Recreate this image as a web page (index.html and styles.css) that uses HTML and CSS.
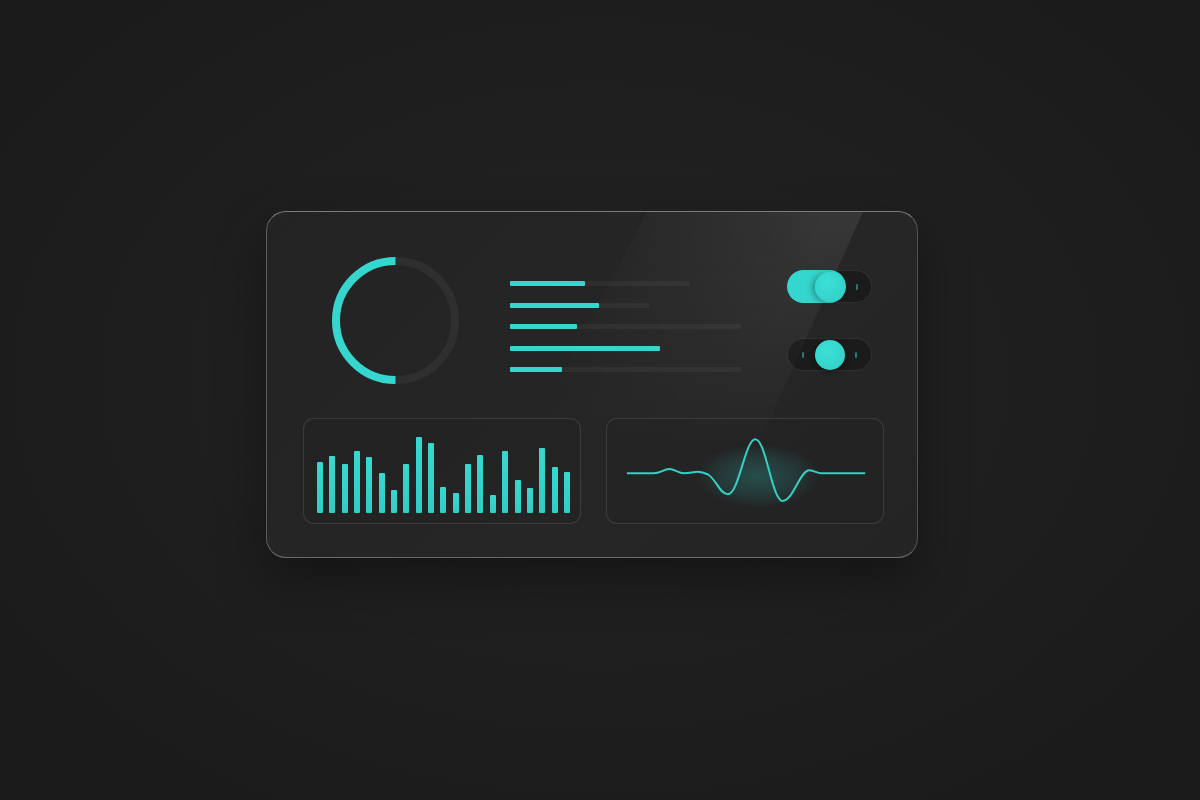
FILE: index.html
```html
<!DOCTYPE html>
<html lang="en">
<head>
<meta charset="utf-8">
<title>Dashboard</title>
<link rel="stylesheet" href="styles.css">
</head>
<body>
<div class="stage">
  <div class="card">
    <div class="top">
      <div class="donut">
        <svg width="127" height="127" viewBox="0 0 127 127">
          <circle cx="63.5" cy="63.5" r="59.5" fill="none" stroke="#2f2f2f" stroke-width="8"/>
          <path d="M63.5 4 A59.5 59.5 0 0 0 63.5 123" fill="none" stroke="#35d6cd" stroke-width="8"/>
        </svg>
      </div>
      <div class="bars">
        <div class="row"><span class="track" style="width:180px"></span><span class="fill" style="width:75px"></span></div>
        <div class="row"><span class="track" style="width:139px"></span><span class="fill" style="width:89px"></span></div>
        <div class="row"><span class="track" style="width:231px"></span><span class="fill" style="width:67px"></span></div>
        <div class="row"><span class="track" style="width:150px"></span><span class="fill" style="width:150px"></span></div>
        <div class="row"><span class="track" style="width:232px"></span><span class="fill" style="width:52px"></span></div>
      </div>
      <div class="toggles">
        <div class="toggle on">
          <span class="pill"><span class="knob"></span></span>
          <span class="tick"></span>
        </div>
        <div class="toggle mid">
          <span class="tick"></span>
          <span class="knob"></span>
          <span class="tick"></span>
        </div>
      </div>
    </div>
    <div class="bottom">
      <div class="panel chart">
        <span class="col" style="height:51px"></span>
        <span class="col" style="height:57px"></span>
        <span class="col" style="height:49px"></span>
        <span class="col" style="height:62px"></span>
        <span class="col" style="height:56px"></span>
        <span class="col" style="height:40px"></span>
        <span class="col" style="height:23px"></span>
        <span class="col" style="height:49px"></span>
        <span class="col" style="height:76px"></span>
        <span class="col" style="height:70px"></span>
        <span class="col" style="height:26px"></span>
        <span class="col" style="height:20px"></span>
        <span class="col" style="height:49px"></span>
        <span class="col" style="height:58px"></span>
        <span class="col" style="height:18px"></span>
        <span class="col" style="height:62px"></span>
        <span class="col" style="height:33px"></span>
        <span class="col" style="height:25px"></span>
        <span class="col" style="height:65px"></span>
        <span class="col" style="height:46px"></span>
        <span class="col" style="height:41px"></span>
      </div>
      <div class="panel wave">
        <svg width="276" height="104" viewBox="1 1 276 104">
          <defs>
            <radialGradient id="glow" cx="0.5" cy="0.5" r="0.5">
              <stop offset="0" stop-color="#2fc9bf" stop-opacity="0.26"/>
              <stop offset="0.6" stop-color="#2fc9bf" stop-opacity="0.13"/>
              <stop offset="1" stop-color="#2fc9bf" stop-opacity="0"/>
            </radialGradient>
          </defs>
          <ellipse cx="152" cy="58" rx="62" ry="32" fill="url(#glow)"/>
          <path d="M21.7 55.3 L48 55.3 C54 55.3 58 51 63.3 51 C69 51 72 55.3 78 55.3 C84 55.3 87 53.8 91.7 53.8 C96 53.8 99 55 102 56.5 C110 61 114 76.3 121.7 76.3 C133 76.3 139 21.3 149.3 21.3 C160 21.3 166 83 176.7 83 C187 83 194 52.3 203.3 52.3 C208 52.3 211 55.3 215 55.3 L258.3 55.3" fill="none" stroke="#34cfc5" stroke-width="2" stroke-linecap="round"/>
        </svg>
      </div>
    </div>
  </div>
</div>
</body>
</html>
```

FILE: styles.css
```css
html, body {
  margin: 0;
  padding: 0;
}

body {
  width: 1200px;
  height: 800px;
  overflow: hidden;
  background: radial-gradient(ellipse 700px 500px at 50% 47%, #232323 0%, #1f1f1f 55%, #1b1b1b 100%);
  font-family: "Inter", "Liberation Sans", sans-serif;
}

.stage {
  padding: 211px 0 0 266px;
}

.card {
  position: relative;
  box-sizing: border-box;
  width: 652px;
  height: 347px;
  padding: 45px 35px 35px 36px;
  border-radius: 20px;
  border: 1.5px solid rgba(255, 255, 255, 0.26);
  border-top-color: rgba(255, 255, 255, 0.4);
  border-bottom-color: rgba(255, 255, 255, 0.32);
  border-right-color: rgba(255, 255, 255, 0.22);
  background: linear-gradient(135deg, #232323 0%, #262626 60%, #242424 100%);
  box-shadow: 0 22px 50px rgba(0, 0, 0, 0.35), inset 0 0 30px rgba(255, 255, 255, 0.015);
  overflow: hidden;
}

.card::before {
  content: "";
  position: absolute;
  inset: 0;
  pointer-events: none;
  background: linear-gradient(to bottom, rgba(255, 255, 255, 0.08) 0%, rgba(255, 255, 255, 0.035) 40%, rgba(255, 255, 255, 0) 72%);
  clip-path: polygon(380px 0, 596px 0, 440px 347px, 200px 347px);
  -webkit-mask-image: linear-gradient(114deg, transparent 40%, #000 70%, #000 100%);
  mask-image: linear-gradient(114deg, transparent 40%, #000 70%, #000 100%);
}

.top {
  position: relative;
  display: flex;
  align-items: flex-start;
  height: 127px;
}

.donut {
  margin-left: 29px;
  width: 127px;
  height: 127px;
}

.donut svg {
  display: block;
}

.bars {
  margin-left: 51px;
  padding-top: 24px;
  display: flex;
  flex-direction: column;
  gap: 16.5px;
}

.row {
  position: relative;
  height: 5px;
}

.row .track {
  position: absolute;
  left: 0;
  top: 0;
  height: 5px;
  background: rgba(255, 255, 255, 0.045);
  border-radius: 1px;
}

.row .fill {
  position: absolute;
  left: 0;
  top: 0;
  height: 5px;
  background: #35d6cd;
  border-radius: 1px;
}

.toggles {
  margin-left: auto;
  margin-right: 10px;
  padding-top: 13px;
  display: flex;
  flex-direction: column;
  gap: 35px;
}

.toggle {
  box-sizing: border-box;
  width: 85px;
  height: 33px;
  border-radius: 17px;
  border: 1px solid rgba(255, 255, 255, 0.09);
  background: rgba(10, 10, 10, 0.35);
  display: flex;
  align-items: center;
}

.toggle .tick {
  width: 2px;
  height: 6px;
  border-radius: 1px;
  background: rgba(53, 214, 205, 0.5);
}

.toggle.on .pill {
  margin-left: -1px;
  width: 59px;
  height: 33px;
  border-radius: 17px;
  background: #35d6cd;
  display: flex;
  align-items: center;
  justify-content: flex-end;
  padding-right: 1px;
  box-sizing: border-box;
}

.toggle.on .tick {
  margin-left: auto;
  margin-right: 13px;
}

.knob {
  width: 30px;
  height: 30px;
  border-radius: 50%;
  background: radial-gradient(circle at 40% 35%, #3de0d6 0%, #33d3ca 70%, #2cc4bb 100%);
  box-shadow: -3px 1px 6px rgba(0, 0, 0, 0.3);
}

.toggle.mid {
  justify-content: space-between;
  padding: 0 14px;
}

.toggle.mid .knob {
  box-shadow: 0 2px 6px rgba(0, 0, 0, 0.35);
}

.bottom {
  margin-top: 34px;
  display: grid;
  grid-template-columns: 278px 278px;
  gap: 25px;
}

.panel {
  box-sizing: border-box;
  height: 106px;
  border: 1px solid rgba(255, 255, 255, 0.11);
  border-radius: 11px;
  background: rgba(0, 0, 0, 0.05);
}

.chart {
  display: flex;
  align-items: flex-end;
  justify-content: space-between;
  padding: 0 10px 10px 13px;
}

.col {
  width: 6px;
  background: linear-gradient(to bottom, #37d8cf, #31cdc5);
  border-radius: 1px;
}

.wave svg {
  display: block;
}
```
